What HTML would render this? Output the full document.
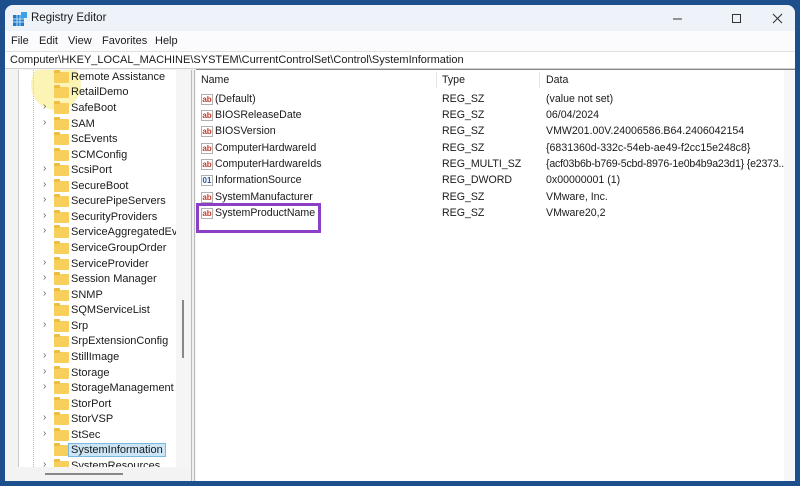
<!DOCTYPE html>
<html><head><style>
*{margin:0;padding:0;box-sizing:border-box}
body{width:800px;height:486px;background:#1d4f8c;position:relative;overflow:hidden;font-family:"Liberation Sans",sans-serif;font-size:11px;color:#1a1a1a}
.win{position:absolute;left:5px;top:5px;width:790px;height:476px;background:#f3f3f3;border-radius:8px 8px 0 0;overflow:hidden}
.title{position:absolute;left:0;top:0;width:790px;height:26px;background:#eef2f9}
.title .t{position:absolute;left:26px;top:7px;font-size:11.5px}
.menu{position:absolute;left:0;top:26px;width:790px;height:20px;background:#fbfbfd}
.menu span{position:absolute;top:4px;font-size:11px}
.addr{position:absolute;left:0;top:46px;width:790px;height:18px;background:#fff;border-top:1px solid #e0e0e0;border-bottom:1px solid #d0d0d0}
.addr span{position:absolute;left:5px;top:2px;font-size:11px}
.tree{position:absolute;left:13px;top:65px;width:158px;height:397px;background:#fff;border-left:1px solid #ccc;overflow:hidden}
.vs{position:absolute;left:171px;top:65px;width:14px;height:397px;background:#f5f5f5}
.thumb{position:absolute;left:177px;top:295px;width:2px;height:58px;background:#888}
.split{position:absolute;left:186px;top:65px;width:4px;height:411px;border-left:1px solid #bbb;border-right:1px solid #bbb;background:#f0f0f0}
.list{position:absolute;left:191px;top:64px;width:599px;height:412px;background:#fff;border-top:1px solid #888;overflow:hidden}
.hs{position:absolute;left:13px;top:462px;width:172px;height:14px;background:#f3f3f3}
.row{position:absolute;left:0;height:15px;width:170px}
.row .f{position:absolute;left:35px;top:2px;width:15px;height:11px;background:#f7cf5a;border-radius:1px}
.row .f:before{content:"";position:absolute;left:0;top:-2px;width:6px;height:3px;background:#eebd3f;border-radius:1px 1px 0 0}
.row .n{position:absolute;left:52px;top:1px;font-size:11px;white-space:nowrap}
.row .c{position:absolute;left:24px;top:0px;font-size:10px;color:#666}
.sel .n{background:#cce6f7;border:1px solid #7ab8e0;padding:0 2px;left:49px;top:0}
.lr{position:absolute;height:16px;font-size:10.6px;white-space:nowrap}
.ic{position:absolute;left:5px;top:1px;width:12px;height:11px;border:1px solid #b0b0b0;font-size:8px;color:#c0392b;font-weight:bold;line-height:9px;text-align:center;background:#fff}
</style></head><body>
<div class="win">
<div class="title">
<svg style="position:absolute;left:8px;top:7px" width="14" height="14"><rect x="0" y="3" width="11" height="11" fill="#1f79c8"/><rect x="8" y="0" width="6" height="6" fill="#3aa0e8"/><path d="M0 7h11M0 10h11M4 3v11M7 3v11" stroke="#bfe0f7" stroke-width="1"/></svg>
<span class="t">Registry Editor</span>
<svg style="position:absolute;left:668px;top:8px" width="120" height="12"><path d="M0 6h9" stroke="#333"/><rect x="59.5" y="1.5" width="8" height="8" fill="none" stroke="#333"/><path d="M100 1l9 9M109 1l-9 9" stroke="#333" stroke-width="1.1"/></svg>
</div>
<div class="menu"><span style="left:6px">File</span><span style="left:34px">Edit</span><span style="left:63px">View</span><span style="left:97px">Favorites</span><span style="left:150px">Help</span></div>
<div class="addr"><span>Computer\HKEY_LOCAL_MACHINE\SYSTEM\CurrentControlSet\Control\SystemInformation</span></div>
<div class="tree">
<div style="position:absolute;left:14px;top:0;width:0;height:397px;border-left:1px dotted #bbb"></div>
<div style="position:absolute;left:12px;top:-10px;width:50px;height:50px;border-radius:50%;background:rgba(250,235,120,.55)"></div>
<div class="row" style="top:0px"><span class="f"></span><span class="n">Remote Assistance</span></div>
<div class="row" style="top:15px"><span class="f"></span><span class="n">RetailDemo</span></div>
<div class="row" style="top:31px"><span class="c">›</span><span class="f"></span><span class="n">SafeBoot</span></div>
<div class="row" style="top:47px"><span class="c">›</span><span class="f"></span><span class="n">SAM</span></div>
<div class="row" style="top:62px"><span class="f"></span><span class="n">ScEvents</span></div>
<div class="row" style="top:78px"><span class="f"></span><span class="n">SCMConfig</span></div>
<div class="row" style="top:93px"><span class="c">›</span><span class="f"></span><span class="n">ScsiPort</span></div>
<div class="row" style="top:109px"><span class="c">›</span><span class="f"></span><span class="n">SecureBoot</span></div>
<div class="row" style="top:124px"><span class="c">›</span><span class="f"></span><span class="n">SecurePipeServers</span></div>
<div class="row" style="top:140px"><span class="c">›</span><span class="f"></span><span class="n">SecurityProviders</span></div>
<div class="row" style="top:155px"><span class="c">›</span><span class="f"></span><span class="n">ServiceAggregatedEver</span></div>
<div class="row" style="top:171px"><span class="f"></span><span class="n">ServiceGroupOrder</span></div>
<div class="row" style="top:187px"><span class="c">›</span><span class="f"></span><span class="n">ServiceProvider</span></div>
<div class="row" style="top:202px"><span class="c">›</span><span class="f"></span><span class="n">Session Manager</span></div>
<div class="row" style="top:218px"><span class="c">›</span><span class="f"></span><span class="n">SNMP</span></div>
<div class="row" style="top:233px"><span class="f"></span><span class="n">SQMServiceList</span></div>
<div class="row" style="top:249px"><span class="c">›</span><span class="f"></span><span class="n">Srp</span></div>
<div class="row" style="top:264px"><span class="f"></span><span class="n">SrpExtensionConfig</span></div>
<div class="row" style="top:280px"><span class="c">›</span><span class="f"></span><span class="n">StillImage</span></div>
<div class="row" style="top:296px"><span class="c">›</span><span class="f"></span><span class="n">Storage</span></div>
<div class="row" style="top:311px"><span class="c">›</span><span class="f"></span><span class="n">StorageManagement</span></div>
<div class="row" style="top:327px"><span class="f"></span><span class="n">StorPort</span></div>
<div class="row" style="top:342px"><span class="c">›</span><span class="f"></span><span class="n">StorVSP</span></div>
<div class="row" style="top:358px"><span class="c">›</span><span class="f"></span><span class="n">StSec</span></div>
<div class="row sel" style="top:373px"><span class="f"></span><span class="n">SystemInformation</span></div>
<div class="row" style="top:389px"><span class="c">›</span><span class="f"></span><span class="n">SystemResources</span></div>
</div>
<div class="vs"></div><div class="thumb"></div>
<div class="hs"><div style="position:absolute;left:27px;top:6px;width:78px;height:2px;background:#888"></div></div>
<div class="split"></div>
<div class="list">
<div style="position:absolute;left:240px;top:2px;height:16px;border-left:1px solid #e5e5e5"></div>
<div style="position:absolute;left:343px;top:2px;height:16px;border-left:1px solid #e5e5e5"></div>
<div class="lr" style="top:4px;left:5px">Name</div><div class="lr" style="top:4px;left:246px">Type</div><div class="lr" style="top:4px;left:350px">Data</div>
<div class="lr" style="top:23px;left:0;width:600px"><span class="ic">ab</span><span style="position:absolute;left:19px">(Default)</span><span style="position:absolute;left:246px">REG_SZ</span><span style="position:absolute;left:350px">(value not set)</span></div>
<div class="lr" style="top:39px;left:0;width:600px"><span class="ic">ab</span><span style="position:absolute;left:19px">BIOSReleaseDate</span><span style="position:absolute;left:246px">REG_SZ</span><span style="position:absolute;left:350px">06/04/2024</span></div>
<div class="lr" style="top:55px;left:0;width:600px"><span class="ic">ab</span><span style="position:absolute;left:19px">BIOSVersion</span><span style="position:absolute;left:246px">REG_SZ</span><span style="position:absolute;left:350px">VMW201.00V.24006586.B64.2406042154</span></div>
<div class="lr" style="top:72px;left:0;width:600px"><span class="ic">ab</span><span style="position:absolute;left:19px">ComputerHardwareId</span><span style="position:absolute;left:246px">REG_SZ</span><span style="position:absolute;left:350px">{6831360d-332c-54eb-ae49-f2cc15e248c8}</span></div>
<div class="lr" style="top:88px;left:0;width:600px"><span class="ic">ab</span><span style="position:absolute;left:19px">ComputerHardwareIds</span><span style="position:absolute;left:246px">REG_MULTI_SZ</span><span style="position:absolute;left:350px;letter-spacing:-0.2px">{acf03b6b-b769-5cbd-8976-1e0b4b9a23d1} {e2373...</span></div>
<div class="lr" style="top:104px;left:0;width:600px"><span class="ic" style="color:#2255aa">01</span><span style="position:absolute;left:19px">InformationSource</span><span style="position:absolute;left:246px">REG_DWORD</span><span style="position:absolute;left:350px">0x00000001 (1)</span></div>
<div class="lr" style="top:121px;left:0;width:600px"><span class="ic">ab</span><span style="position:absolute;left:19px">SystemManufacturer</span><span style="position:absolute;left:246px">REG_SZ</span><span style="position:absolute;left:350px">VMware, Inc.</span></div>
<div class="lr" style="top:137px;left:0;width:600px"><span class="ic">ab</span><span style="position:absolute;left:19px">SystemProductName</span><span style="position:absolute;left:246px">REG_SZ</span><span style="position:absolute;left:350px">VMware20,2</span></div>
<div style="position:absolute;left:0px;top:133px;width:125px;height:30px;border:3px solid #8b3fc6"></div>
<div style="position:absolute;left:588px;top:0;width:11px;height:412px;background:#f7f7f7"></div>
</div>
</div>
</body></html>
